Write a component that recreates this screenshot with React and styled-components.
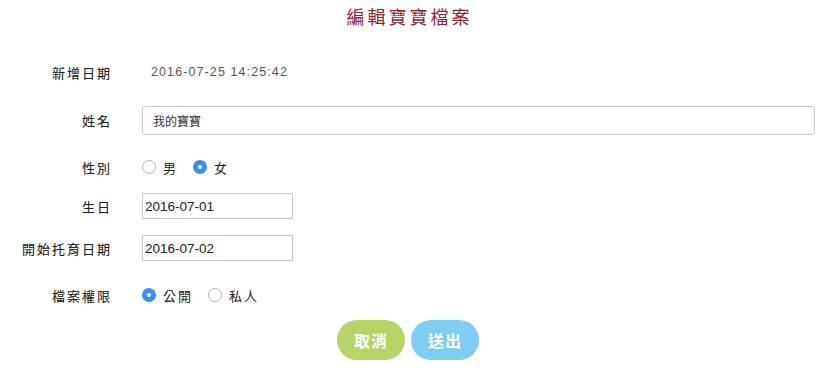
import { useState } from "react";
import styled, { createGlobalStyle } from "styled-components";

const GlobalStyle = createGlobalStyle`
  body {
    margin: 0;
    background: #fff;
    font-family: "Liberation Sans", "Noto Sans CJK TC", sans-serif;
  }
`;

const Page = styled.div`
  width: 816px;
  box-sizing: border-box;
  padding-top: 8px;
`;

const Title = styled.h1`
  margin: 0;
  text-align: center;
  font-size: 18px;
  line-height: 20px;
  font-weight: normal;
  letter-spacing: 3px;
  color: #8e2635;
  padding-left: 3px;
`;

const Form = styled.form`
  display: flex;
  flex-direction: column;
`;

const Row = styled.div`
  display: flex;
  align-items: center;
  height: 30px;
  margin-top: ${(p) => p.$space}px;
`;

const Label = styled.label`
  width: 112px;
  flex: none;
  text-align: right;
  font-size: 13px;
  letter-spacing: 2px;
  font-weight: normal;
  -webkit-text-stroke: 0.1px #222;
  color: #222;
  margin-right: 30px;
`;

const Value = styled.span`
  padding-left: 9px;
  font-size: 12.5px;
  letter-spacing: 1.1px;
  color: #555;
`;

const TextInput = styled.input`
  flex: 1;
  margin-right: 1px;
  height: 29px;
  box-sizing: border-box;
  border: 1px solid #c8c8c8;
  border-radius: 3px;
  padding: 0 10px;
  font-family: inherit;
  font-size: 12px;
  color: #333;
  outline: none;
`;

const DateInput = styled.input`
  width: 151px;
  height: 26px;
  box-sizing: border-box;
  border: 1px solid #c8c8c8;
  border-radius: 0;
  padding: 0 2px;
  font-family: "Liberation Sans", sans-serif;
  font-size: 13.5px;
  color: #222;
  outline: none;
`;

const Choices = styled.div`
  display: flex;
  align-items: center;
  gap: 15px;
`;

const Choice = styled.label`
  display: flex;
  align-items: center;
  gap: 7px;
  font-size: 13px;
  letter-spacing: 2px;
  color: #222;
  cursor: pointer;
`;

const Dot = styled.span`
  width: 14px;
  height: 14px;
  box-sizing: border-box;
  border-radius: 50%;
  display: flex;
  align-items: center;
  justify-content: center;
  border: ${(p) => (p.$on ? "none" : "1px solid #b5b5b5")};
  background: ${(p) => (p.$on ? "#3b8ff2" : "#fff")};

  &::after {
    content: "";
    width: 4px;
    height: 4px;
    border-radius: 50%;
    background: #fff;
    display: ${(p) => (p.$on ? "block" : "none")};
  }
`;

const Buttons = styled.div`
  display: flex;
  justify-content: center;
  gap: 6px;
  margin-top: 10px;
`;

const Button = styled.button`
  width: 68px;
  height: 40px;
  border: none;
  border-radius: 20px;
  background: ${(p) => p.$color};
  color: #fff;
  font-family: inherit;
  font-size: 16px;
  font-weight: bold;
  letter-spacing: 1px;
  cursor: pointer;
`;

const Radio = ({ options, value, onChange }) => (
  <Choices>
    {options.map((o) => (
      <Choice key={o} onClick={() => onChange(o)}>
        <Dot $on={value === o} />
        {o}
      </Choice>
    ))}
  </Choices>
);

export default function App() {
  const [name, setName] = useState("我的寶寶");
  const [gender, setGender] = useState("女");
  const [birth, setBirth] = useState("2016-07-01");
  const [start, setStart] = useState("2016-07-02");
  const [access, setAccess] = useState("公開");

  return (
    <Page>
      <GlobalStyle />
      <Title>編輯寶寶檔案</Title>
      <Form onSubmit={(e) => e.preventDefault()}>
        <Row $space={29}>
          <Label>新增日期</Label>
          <Value>2016-07-25 14:25:42</Value>
        </Row>
        <Row $space={18}>
          <Label>姓名</Label>
          <TextInput value={name} onChange={(e) => setName(e.target.value)} />
        </Row>
        <Row $space={17}>
          <Label>性別</Label>
          <Radio options={["男", "女"]} value={gender} onChange={setGender} />
        </Row>
        <Row $space={9}>
          <Label>生日</Label>
          <DateInput value={birth} onChange={(e) => setBirth(e.target.value)} />
        </Row>
        <Row $space={12}>
          <Label>開始托育日期</Label>
          <DateInput value={start} onChange={(e) => setStart(e.target.value)} />
        </Row>
        <Row $space={17}>
          <Label>檔案權限</Label>
          <Radio options={["公開", "私人"]} value={access} onChange={setAccess} />
        </Row>
        <Buttons>
          <Button type="button" $color="#b7d468">取消</Button>
          <Button type="submit" $color="#80cdf2">送出</Button>
        </Buttons>
      </Form>
    </Page>
  );
}
